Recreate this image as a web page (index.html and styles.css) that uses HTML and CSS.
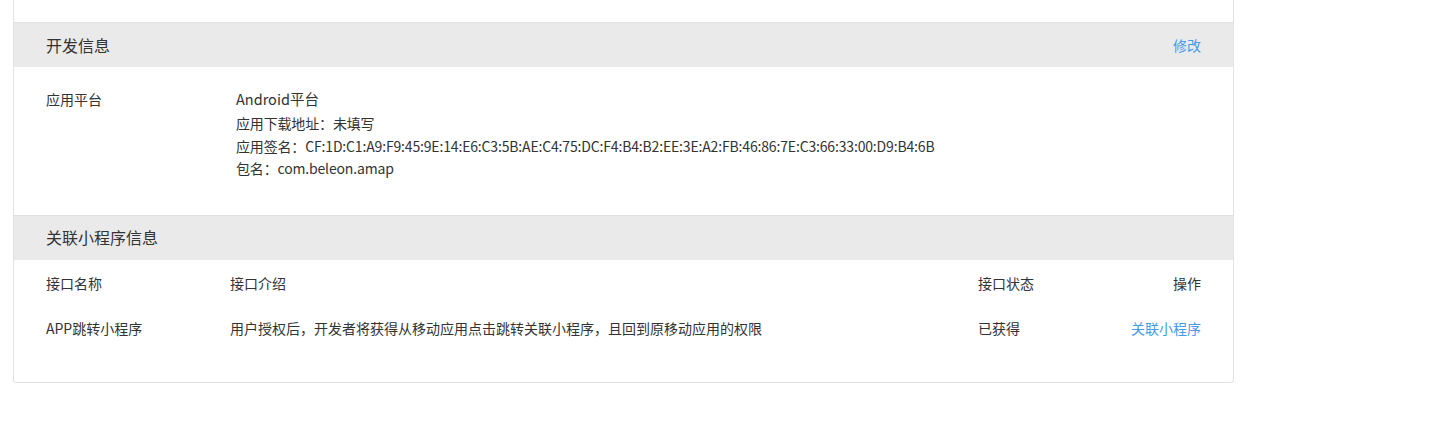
FILE: index.html
```html
<!DOCTYPE html>
<html lang="zh-CN">
<head>
<meta charset="utf-8">
<title>应用信息</title>
<link rel="stylesheet" href="styles.css">
</head>
<body>
<div class="page">
  <div class="card">
    <div class="card-top"></div>

    <div class="section-head">
      <span class="section-title">开发信息</span>
      <a class="link" href="#">修改</a>
    </div>
    <div class="dev-body">
      <div class="dev-label">应用平台</div>
      <div class="dev-value">
        <div class="platform">Android平台</div>
        <div class="detail">
          <div>应用下载地址：未填写</div>
          <div>应用签名：CF:1D:C1:A9:F9:45:9E:14:E6:C3:5B:AE:C4:75:DC:F4:B4:B2:EE:3E:A2:FB:46:86:7E:C3:66:33:00:D9:B4:6B</div>
          <div>包名：com.beleon.amap</div>
        </div>
      </div>
    </div>

    <div class="section-head">
      <span class="section-title">关联小程序信息</span>
    </div>
    <div class="api-body">
      <div class="api-row api-row-head">
        <div>接口名称</div>
        <div>接口介绍</div>
        <div>接口状态</div>
        <div class="col-op">操作</div>
      </div>
      <div class="api-row">
        <div>APP跳转小程序</div>
        <div>用户授权后，开发者将获得从移动应用点击跳转关联小程序，且回到原移动应用的权限</div>
        <div>已获得</div>
        <div class="col-op"><a class="link" href="#">关联小程序</a></div>
      </div>
    </div>
  </div>
</div>
</body>
</html>
```

FILE: styles.css
```css
* { box-sizing: border-box; }

html, body {
  margin: 0;
  padding: 0;
  background: #fff;
}

body {
  font-family: "Noto Sans CJK SC", "Noto Sans", sans-serif;
  color: #333;
  font-size: 14px;
}

.page {
  padding-left: 13px;
  width: 1234px;
}

.card {
  border: 1px solid #e3e3e3;
  border-top: none;
  border-radius: 0 0 3px 3px;
  background: #fff;
}

.card-top {
  height: 22px;
}

.section-head {
  height: 45px;
  border-top: 1px solid #e0e0e0;
  background: #eaeaea;
  display: flex;
  align-items: center;
  justify-content: space-between;
  padding: 0 32px 0 32px;
}

.section-title {
  font-size: 16px;
  color: #333;
  margin-top: -1px;
}

.link {
  color: #459ae9;
  text-decoration: none;
  font-size: 14px;
}

.dev-body {
  display: flex;
  padding: 21px 32px 35px 32px;
}

.dev-label {
  width: 190px;
  line-height: 22px;
  font-size: 14px;
}

.dev-value {
  flex: 1;
}

.platform {
  font-size: 14.5px;
  line-height: 22px;
}

.detail {
  margin-top: 2px;
  font-size: 14px;
  letter-spacing: -0.16px;
  line-height: 22.5px;
}

.api-body {
  padding: 1px 32px 31px 32px;
}

.api-row {
  display: grid;
  grid-template-columns: 184px 748px 1fr auto;
  height: 45px;
  align-items: center;
  font-size: 14px;
}

.col-op {
  text-align: right;
}
```
